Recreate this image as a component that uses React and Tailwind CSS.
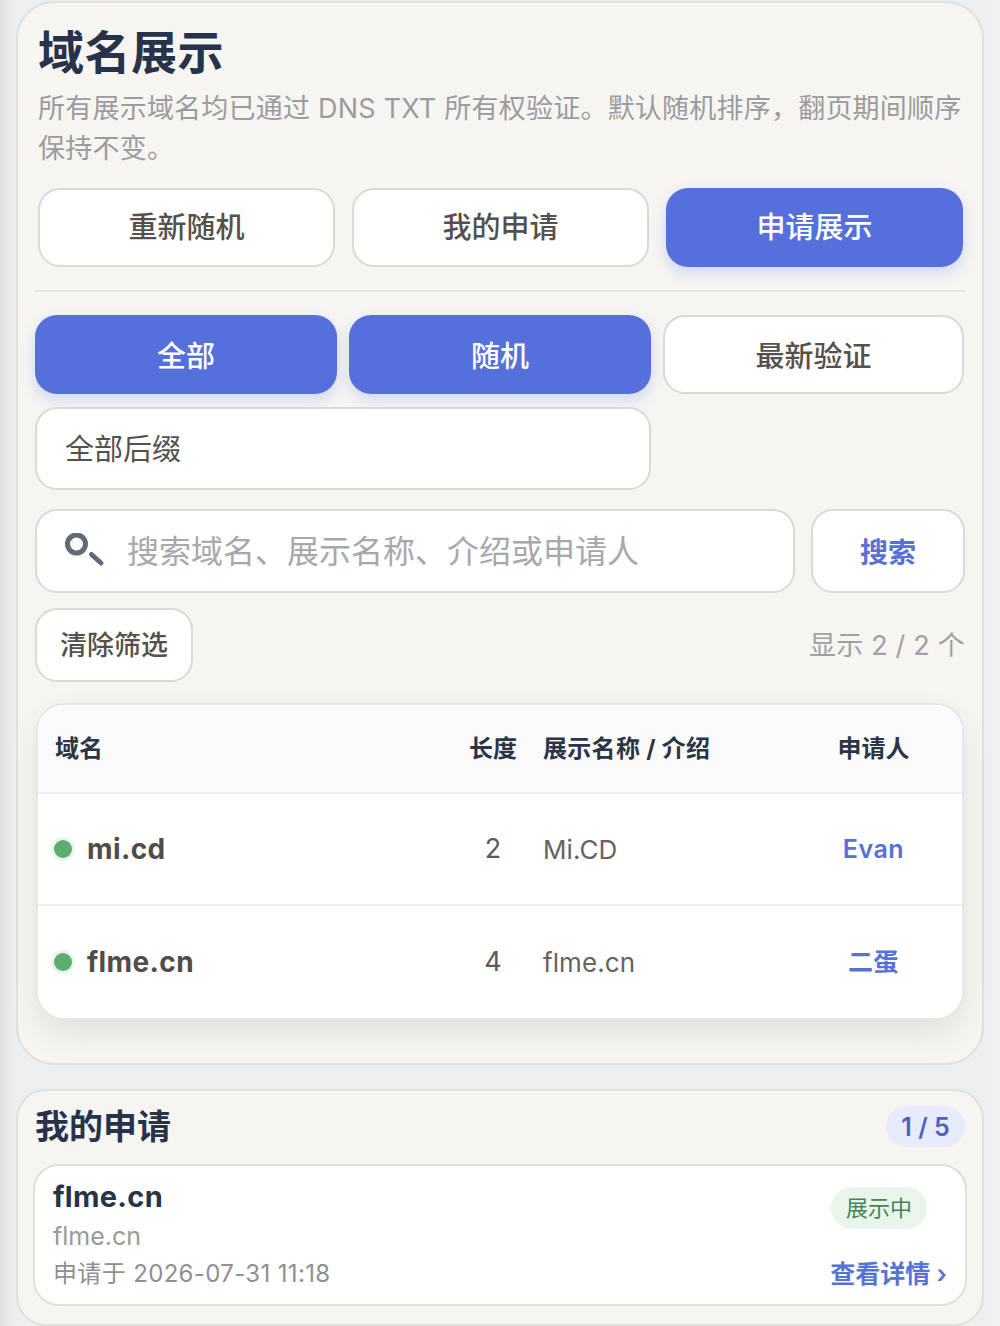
import React from 'react';

const FONT = "font-['Inter','Noto_Sans_CJK_SC',sans-serif]";

const ROWS = [
  { domain: 'mi.cd', length: 2, name: 'Mi.CD', owner: 'Evan' },
  { domain: 'flme.cn', length: 4, name: 'flme.cn', owner: '二蛋' },
];

const Button = ({ active, className = '', children }) => (
  <button
    className={
      'flex items-center justify-center rounded-[22px] text-[29px] font-medium ' +
      (active
        ? 'bg-[#5570db] text-white shadow-[0_6px_14px_rgba(86,114,221,0.22)] '
        : 'border-2 border-[#d9d9d6] bg-white text-[#55504b] ') +
      className
    }
  >
    {children}
  </button>
);

const SearchIcon = () => (
  <svg width="40" height="36" viewBox="0 0 40 36" fill="none" className="shrink-0">
    <circle cx="11.5" cy="11" r="9" stroke="#626a7a" strokeWidth="5" />
    <path d="M26.5 21.5 L36 30" stroke="#626a7a" strokeWidth="5" strokeLinecap="round" />
  </svg>
);

const TableRow = ({ row, border }) => (
  <div
    className={
      'grid h-[112px] grid-cols-[416px_78px_295px_1fr] items-center ' +
      (border ? 'border-b-2 border-[#eeeeee]' : '')
    }
  >
    <div className="flex items-center pl-[16px]">
      <span className="h-[18px] w-[18px] rounded-full bg-[#5cae6e] shadow-[0_0_0_3px_rgba(92,174,110,0.12)]" />
      <span className="ml-[15px] text-[28px] font-bold tracking-[0.4px] text-[#524c47]">{row.domain}</span>
    </div>
    <div className="text-center text-[27px] text-[#5f5a55]">{row.length}</div>
    <div className="pl-[11px] text-[26px] tracking-[0.1px] text-[#66625e]">{row.name}</div>
    <div className="pr-[42px] pt-[2px] text-center text-[25px] font-semibold tracking-[0.5px] text-[#5672d6]">{row.owner}</div>
  </div>
);

export default function App() {
  return (
    <div className={FONT + " h-[1326px] w-[1000px] overflow-hidden bg-[linear-gradient(to_right,#dddede_0px,#eeefef_14px,#eeefef_986px,#f3f3f2_100%)] px-[16px] pt-[1px]"}>
      <section className="flex h-[1064px] flex-col rounded-[38px] border-2 border-[#e0e0dd] bg-[#f6f5f2] px-[17px]">
        <div className="pl-[3px]">
          <h1 className="mt-[19px] h-[60px] text-[46px] font-bold leading-[60px] tracking-[0.5px] text-[#27334a]">域名展示</h1>
          <p className="mt-[7px] w-[929px] text-[27px] leading-[40px] tracking-[0.22px] text-[#9b9c9d]">
            所有展示域名均已通过 DNS TXT 所有权验证。默认随机排序，翻页期间顺序保持不变。
          </p>
          <div className="mt-[19px] grid h-[79px] grid-cols-[297px_297px_297px] gap-x-[17px]">
            <Button>重新随机</Button>
            <Button>我的申请</Button>
            <Button active>申请展示</Button>
          </div>
        </div>

        <div className="mt-[23px] h-[2px] bg-[#e4e4e1]" />

        <div className="mt-[23px] grid h-[79px] grid-cols-[302px_302px_301px] gap-x-[12px]">
          <Button active className="pt-[4px]">全部</Button>
          <Button active className="pt-[4px]">随机</Button>
          <Button className="pt-[4px]">最新验证</Button>
        </div>

        <div className="mt-[13px] flex h-[83px] w-[616px] items-center rounded-[22px] border-2 border-[#d9d9d6] bg-white pl-[28px] pt-[3px] text-[29px] text-[#55504b]">
          全部后缀
        </div>

        <div className="mt-[19px] flex h-[84px] gap-x-[16px]">
          <div className="flex w-[760px] items-center rounded-[22px] border-2 border-[#d9d9d6] bg-white pl-[28px]">
            <SearchIcon />
            <span className="ml-[22px] pt-[2px] text-[32px] text-[#a6a8ab]">搜索域名、展示名称、介绍或申请人</span>
          </div>
          <button className="flex w-[154px] items-center justify-center rounded-[22px] border-2 border-[#d9d9d6] bg-white pt-[3px] text-[28px] font-semibold text-[#5672d6]">
            搜索
          </button>
        </div>

        <div className="mt-[15px] flex h-[74px] items-center justify-between">
          <button className="flex h-full w-[158px] items-center justify-center rounded-[22px] border-2 border-[#d9d9d6] bg-white pt-[2px] text-[27px] font-medium text-[#55504b]">
            清除筛选
          </button>
          <span className="pt-[2px] text-[27px] tracking-[0.2px] text-[#a0a1a2]">显示 2 / 2 个</span>
        </div>

        <div className="mx-[1px] mt-[21px] h-[317px] overflow-hidden rounded-[28px] border-2 border-[#e6e6e4] bg-white shadow-[0_14px_30px_rgba(60,60,60,0.1)]">
          <div className="grid h-[89px] grid-cols-[416px_78px_295px_1fr] items-center border-b-2 border-[#eeeeee] bg-[#fbfbfb] text-[24px] font-bold text-[#2b3547]">
            <div className="pl-[17px]">域名</div>
            <div className="text-center">长度</div>
            <div className="pl-[11px] tracking-[0.3px]">展示名称 / 介绍</div>
            <div className="pr-[42px] text-center">申请人</div>
          </div>
          <TableRow row={ROWS[0]} border />
          <TableRow row={ROWS[1]} />
        </div>
      </section>

      <section className="mt-[24px] h-[237px] rounded-[30px] border-2 border-[#e0e0dd] bg-[#f6f5f2] px-[15px]">
        <div className="flex h-[73px] items-center justify-between pb-[2px] pl-[2px] pr-[2px]">
          <h2 className="text-[34px] font-bold text-[#27334a]">我的申请</h2>
          <span className="flex h-[41px] w-[79px] items-center justify-center rounded-full bg-[#e8ebfb] pt-[3px] text-[25px] font-semibold text-[#4c64bd]">
            1 / 5
          </span>
        </div>
        <div className="flex h-[142px] justify-between rounded-[26px] border-2 border-[#dfdfdc] bg-white px-[18px]">
          <div>
            <div className="mt-[12px] text-[29px] font-bold leading-[38px] tracking-[0.3px] text-[#27334a]">flme.cn</div>
            <div className="mt-[1px] text-[25px] leading-[38px] text-[#9a9a9a]">flme.cn</div>
            <div className="text-[24px] leading-[37px] tracking-[0.35px] text-[#8f8f8f]">申请于 2026-07-31 11:18</div>
          </div>
          <div className="flex flex-col items-end">
            <span className="mr-[20px] mt-[21px] flex h-[42px] w-[96px] items-center justify-center rounded-full bg-[#e9f5ea] text-[22px] text-[#4a8259]">
              展示中
            </span>
            <span className="mt-[27px] text-[25px] font-semibold text-[#5672d6]">查看详情 ›</span>
          </div>
        </div>
      </section>
    </div>
  );
}
